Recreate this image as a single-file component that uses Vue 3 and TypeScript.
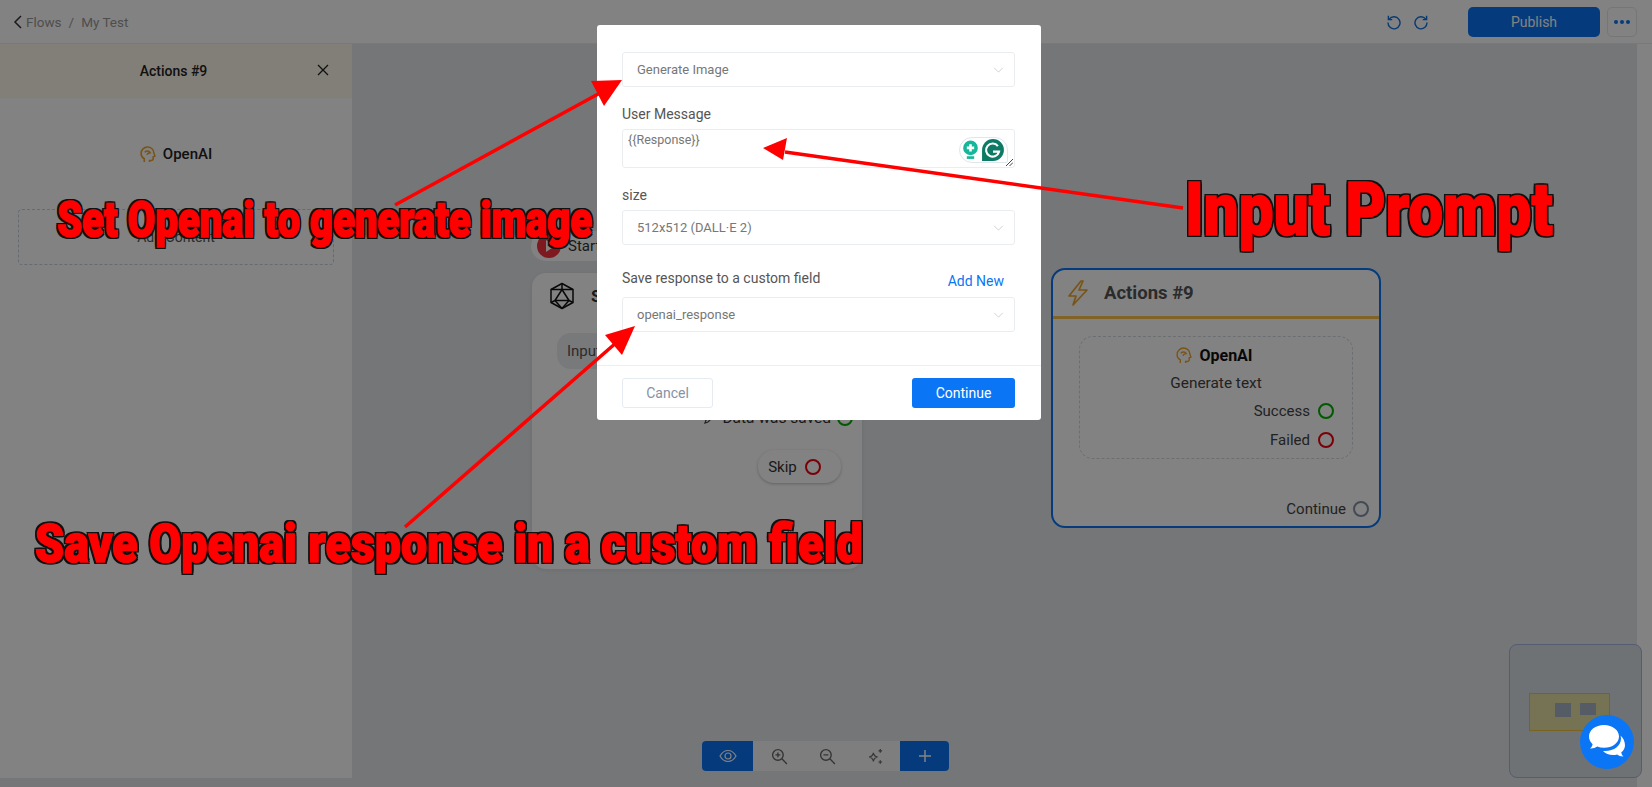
<script setup lang="ts">
const arrows = [
  { x1: 395, y1: 205, x2: 600, y2: 93, head: '622,80 591,81 604,106' },
  { x1: 1183, y1: 208, x2: 785, y2: 152, head: '763,148 787,138 783,160' },
  { x1: 405, y1: 527, x2: 617, y2: 342, head: '635,326 605,335 622,355' }
]
</script>

<template>
  <div class="page">
    <header class="topbar">
      <div class="crumbs">
        <svg width="10" height="14" viewBox="0 0 10 14" fill="none" stroke="#333" stroke-width="1.5"><path d="M8 1 2 7l6 6" /></svg>
        <span>Flows</span>
        <span class="slash">/</span>
        <span>My Test</span>
      </div>
      <div class="top-actions">
        <svg class="hist" width="16" height="16" viewBox="0 0 16 16" fill="none" stroke="#0d6fe0" stroke-width="1.4"><path d="M3.2 5.2A6 6 0 1 1 2 8.6" /><path d="M2.4 1.8v3.8h3.8" /></svg>
        <svg class="hist" width="16" height="16" viewBox="0 0 16 16" fill="none" stroke="#0d6fe0" stroke-width="1.4"><path d="M12.8 5.2A6 6 0 1 0 14 8.6" /><path d="M13.6 1.8v3.8H9.8" /></svg>
        <button class="publish">Publish</button>
        <button class="more"><i></i><i></i><i></i></button>
      </div>
    </header>

    <div class="workspace">
      <aside class="panel">
        <div class="panel-head">
          <span>Actions #9</span>
          <svg class="panel-close" width="14" height="14" viewBox="0 0 14 14" stroke="#222" stroke-width="1.3"><path d="M2 2l10 10M12 2 2 12" /></svg>
        </div>
        <div class="panel-app">
          <svg width="16" height="17" viewBox="0 0 15 16" fill="none" stroke="#eda52d" stroke-width="1.5"><path d="M4 15v-3C2 11 1 9 1 7c0-3.400 2.800-6 6-6 3.400 0 6 2.400 6 5.500l1 3-1.600.6V12c0 1-.8 1.600-2 1.600H9V15" /><path d="M4.500 6c.8-1.800 4-1.800 5 .2-1.500.2-2.500.4-3 2" /></svg>
          <span>OpenAI</span>
        </div>
        <div class="panel-drop">Add Content</div>
      </aside>

      <main class="canvas">
        <div class="start-pill">
          <svg width="28" height="28" viewBox="0 0 28 28"><circle cx="14" cy="14" r="12" fill="#f7323f" /><path d="M11 8l9 6-9 6z" fill="#fff" /></svg>
          <span>Start</span>
        </div>

        <section class="node node-input">
          <div class="node-input-head">
            <svg width="26" height="28" viewBox="0 0 26 28" fill="none" stroke="#111" stroke-width="1.5" stroke-linejoin="round"><path d="M13 1.500 24 7.500v13L13 26.500 2 20.500v-13z" /><path d="M13 7.500 20 18.500H6z" /><path d="M13 1.500v6M2 7.500l11 0 11 0M2 20.500l4-2M24 20.500l-4-2M13 26.500l-7-8M13 26.500l7-8" /></svg>
            <strong>Send</strong>
          </div>
          <div class="input-chip">Input</div>
          <div class="saved-row">
            <svg width="12" height="12" viewBox="0 0 12 12" fill="none" stroke="#444" stroke-width="1.200"><path d="M1 11l1-3 6-6 2 2-6 6z" /></svg>
            <span>Data was saved</span>
            <i class="port port-green"></i>
          </div>
          <div class="skip-pill">
            <span>Skip</span>
            <i class="port port-red"></i>
          </div>
        </section>

        <section class="node node-actions">
          <div class="actions-head">
            <svg width="22" height="28" viewBox="0 0 22 28" fill="none" stroke="#eda52d" stroke-width="1.700" stroke-linejoin="round"><path d="M14 2 2 17h7l-3 9 14-15h-8l4-9z" /></svg>
            <strong>Actions #9</strong>
          </div>
          <div class="actions-box">
            <div class="box-title">
              <svg width="16" height="17" viewBox="0 0 15 16" fill="none" stroke="#eda52d" stroke-width="1.300"><path d="M4 15v-3C2 11 1 9 1 7c0-3.400 2.800-6 6-6 3.400 0 6 2.400 6 5.500l1 3-1.600.6V12c0 1-.8 1.600-2 1.600H9V15" /><path d="M4.500 6c.8-1.800 4-1.800 5 .2-1.500.2-2.500.4-3 2" /></svg>
              <b>OpenAI</b>
            </div>
            <div class="box-sub">Generate text</div>
            <div class="box-row">Success <i class="port port-green"></i></div>
            <div class="box-row">Failed <i class="port port-red"></i></div>
          </div>
          <div class="continue-row">Continue <i class="port port-gray"></i></div>
        </section>

        <div class="toolbar">
          <button class="tool tool-blue tool-eye">
            <svg width="18" height="14" viewBox="0 0 18 14" fill="none" stroke="#fff" stroke-width="1.200"><path d="M1 7c2-3.500 4.800-5.500 8-5.500S15 3.500 17 7c-2 3.500-4.800 5.500-8 5.500S3 10.500 1 7z" /><circle cx="9" cy="7" r="3" /></svg>
          </button>
          <div class="tool-mid">
            <svg width="17" height="17" viewBox="0 0 16 16" fill="none" stroke="#666" stroke-width="1.300"><circle cx="6.500" cy="6.500" r="5" /><path d="M10.200 10.200 15 15M6.500 4.200v4.600M4.200 6.500h4.600" /></svg>
            <svg width="17" height="17" viewBox="0 0 16 16" fill="none" stroke="#666" stroke-width="1.300"><circle cx="6.500" cy="6.500" r="5" /><path d="M10.200 10.200 15 15M4.200 6.500h4.600" /></svg>
            <svg width="17" height="17" viewBox="0 0 16 16" fill="none" stroke="#666" stroke-width="1.100"><path d="M6 4.500c.5 2.500 1.500 3.500 4 4-2.500.5-3.500 1.500-4 4-.5-2.500-1.500-3.500-4-4 2.500-.5 3.500-1.500 4-4z" /><path d="M12.500 1v3.400M10.800 2.700h3.400M12.500 11.500v3.400M10.800 13.200h3.400" /></svg>
          </div>
          <button class="tool tool-blue tool-plus">
            <svg width="14" height="14" viewBox="0 0 14 14" stroke="#fff" stroke-width="1.500"><path d="M7 1v12M1 7h12" /></svg>
          </button>
        </div>
      </main>
      <div class="edge"></div>
    </div>

    <div class="minimap">
      <div class="mini-frame">
        <i></i><i class="short"></i>
      </div>
    </div>

    <div class="dim"></div>

    <div class="modal">
      <div class="modal-body">
        <div class="select"><span>Generate Image</span><svg class="chev" width="11" height="6" viewBox="0 0 12 7" fill="none" stroke="#ccd0d4" stroke-width="1.100"><path d="M1 1l5 5 5-5" /></svg></div>

        <label class="lbl lbl-msg">User Message</label>
        <div class="textarea">
          <span>&#123;&#123;Response&#125;&#125;</span>
          <div class="grammarly">
            <svg width="17" height="21" viewBox="0 0 16 20"><circle cx="8" cy="7.500" r="7" fill="#15b79a" /><path d="M8 4v7M4.500 7.500h7" stroke="#fff" stroke-width="2.400" /><rect x="4.500" y="15.500" width="7" height="2.500" fill="#15b79a" /></svg>
            <svg width="24" height="24" viewBox="0 0 22 22"><path d="M11 1a10 10 0 1 1 0 20H1V11A10 10 0 0 1 11 1z" fill="#0c7a64" /><path d="M15.500 7.500a6 6 0 1 0 1 5H11" fill="none" stroke="#fff" stroke-width="2" /></svg>
          </div>
          <svg class="resize" width="7" height="7" viewBox="0 0 7 7" stroke="#333" stroke-width=".9"><path d="M0 7l7-7M3.500 7 7 3.500" /></svg>
        </div>

        <label class="lbl lbl-size">size</label>
        <div class="select"><span>512x512 (DALL·E 2)</span><svg class="chev" width="11" height="6" viewBox="0 0 12 7" fill="none" stroke="#ccd0d4" stroke-width="1.100"><path d="M1 1l5 5 5-5" /></svg></div>

        <div class="save-row">
          <label class="lbl">Save response to a custom field</label>
          <a class="add-new">Add New</a>
        </div>
        <div class="select"><span>openai_response</span><svg class="chev" width="11" height="6" viewBox="0 0 12 7" fill="none" stroke="#ccd0d4" stroke-width="1.100"><path d="M1 1l5 5 5-5" /></svg></div>
      </div>
      <div class="modal-foot">
        <button class="btn-cancel">Cancel</button>
        <button class="btn-continue">Continue</button>
      </div>
    </div>

    <button class="chat">
      <svg width="40" height="36" viewBox="0 0 40 36" fill="#fff"><path d="M17 1C8.500 1 2 6 2 12.500c0 3 1.400 5.700 3.600 7.700-.3 1.700-1.300 3.300-2.600 4.300 2.800.2 5.400-.6 7.200-1.900 2.100.8 4.400 1.200 6.800 1.200 8.500 0 15-5 15-11.300S25.500 1 17 1z" /><path d="M33.500 11.500c.3 1 .5 2 .5 3 0 7-6.800 12.500-16 12.500h-2c2.400 2.500 6 4 10 4 1.400 0 2.800-.2 4.100-.6 1.600 1.300 3.900 2.100 6.400 2-1.200-1-2-2.500-2.300-4 2.400-1.900 3.800-4.400 3.800-7.200 0-3.800-1.800-7.400-4.500-9.700z" /></svg>
    </button>

    <svg class="arrows" width="1652" height="787" viewBox="0 0 1652 787">
      <g v-for="(a, i) in arrows" :key="i">
        <line :x1="a.x1" :y1="a.y1" :x2="a.x2" :y2="a.y2" stroke="#f00" stroke-width="3.500" />
        <polygon :points="a.head" fill="#f00" />
      </g>
    </svg>

    <div class="note note-set">Set Openai to generate image</div>
    <div class="note note-input">Input Prompt</div>
    <div class="note note-save">Save Openai response in a custom field</div>
  </div>
</template>

<style>
html, body {
  margin: 0;
  overflow: hidden;
}
</style>

<style scoped>
.page {
  position: relative;
  width: 1652px;
  height: 787px;
  overflow: hidden;
  font-family: Roboto, "Liberation Sans", sans-serif;
  font-size: 14px;
  color: #333;
  background: #fff;
}

.topbar {
  height: 43px;
  display: flex;
  align-items: center;
  justify-content: space-between;
  padding: 0 15px 0 13px;
  background: #fff;
  border-bottom: 1px solid #eceef0;
}

.crumbs {
  display: flex;
  align-items: center;
  gap: 5px;
  color: #9a9a9a;
  font-size: 13.500px;
}

.crumbs svg {
  margin-right: -2px;
}

.slash {
  margin: 0 2px;
}

.top-actions {
  display: flex;
  align-items: center;
}

.hist {
  margin-right: 11px;
}

.publish {
  width: 132px;
  height: 30px;
  margin-left: 28px;
  border: none;
  border-radius: 5px;
  background: #0a75f5;
  color: #fff;
  font: 400 14px Roboto, sans-serif;
}

.more {
  width: 30px;
  height: 30px;
  margin-left: 7px;
  display: flex;
  align-items: center;
  justify-content: center;
  gap: 2px;
  background: #fff;
  border: 1px solid #e6e8ea;
  border-radius: 5px;
}

.more i {
  width: 4px;
  height: 4px;
  border-radius: 50%;
  background: #0a75f5;
}

.workspace {
  display: flex;
  height: 743px;
  background: #e4e7ea;
}

.panel {
  width: 352px;
  height: 734px;
  flex-shrink: 0;
  background: #fff;
  display: flex;
  flex-direction: column;
}

.panel-head {
  position: relative;
  height: 54px;
  display: flex;
  align-items: center;
  justify-content: center;
  padding-right: 5px;
  background: #fff8ec;
  font-weight: 500;
  color: #222;
}

.panel-close {
  position: absolute;
  right: 22px;
  top: 19px;
}

.panel-app {
  margin-top: 47px;
  display: flex;
  justify-content: center;
  align-items: center;
  gap: 7px;
  font-size: 15px;
  font-weight: 500;
  color: #222;
}

.panel-drop {
  margin: 46px 18px 0;
  height: 54px;
  display: flex;
  align-items: center;
  justify-content: center;
  border: 1px dashed #c5d3de;
  border-radius: 4px;
  color: #555;
}

.canvas {
  position: relative;
  flex: 1;
}

.edge {
  width: 15px;
  background: #fff;
}

.start-pill {
  position: absolute;
  left: 179px;
  top: 187px;
  display: flex;
  align-items: center;
  gap: 5px;
  height: 30px;
  padding: 0 10px 0 4px;
  border-radius: 16px;
  background: #fff;
  font-size: 15px;
}

.node {
  position: absolute;
  box-sizing: border-box;
  background: #fff;
  border-radius: 14px;
}

.node-input {
  left: 180px;
  top: 229px;
  width: 330px;
  height: 296px;
  padding: 9px 20px;
  box-shadow: 0 1px 4px rgba(0, 0, 0, 0.08);
}

.node-input-head {
  display: flex;
  align-items: center;
  gap: 16px;
  margin-left: -3px;
  font-size: 17px;
}

.input-chip {
  margin: 23px 0 0 5px;
  width: 120px;
  height: 36px;
  padding-left: 10px;
  line-height: 36px;
  border-radius: 14px;
  background: #eceef0;
  color: #555;
  font-size: 15px;
}

.saved-row {
  position: absolute;
  right: 9px;
  top: 136px;
  display: flex;
  align-items: center;
  gap: 6px;
  font-size: 15.500px;
}

.skip-pill {
  position: absolute;
  right: 21px;
  top: 177px;
  width: 83px;
  height: 33px;
  box-sizing: border-box;
  padding-right: 10px;
  display: flex;
  align-items: center;
  justify-content: center;
  gap: 8px;
  background: #fff;
  border-radius: 16px;
  box-shadow: 0 1px 3px rgba(0, 0, 0, 0.25);
  font-size: 15px;
}

.port {
  display: inline-block;
  box-sizing: border-box;
  width: 16px;
  height: 16px;
  border-radius: 50%;
  border-width: 2px;
  border-style: solid;
  background: #fff;
}

.port-green {
  border-color: #00b000;
}

.port-red {
  border-color: #f00010;
}

.port-gray {
  border-color: #8492a6;
}

.node-actions {
  left: 699px;
  top: 224px;
  width: 330px;
  height: 260px;
  border: 2px solid #0a75f5;
}

.actions-head {
  height: 46px;
  display: flex;
  align-items: center;
  gap: 15px;
  padding-left: 14px;
  border-bottom: 3px solid #ffc24d;
  font-size: 18.500px;
  color: #555;
}

.actions-head strong {
  font-weight: 700;
}

.actions-box {
  box-sizing: border-box;
  margin: 17px 26px 0 26px;
  height: 123px;
  padding-top: 9px;
  border: 1.500px dashed #d3dae0;
  border-radius: 14px;
}

.box-title {
  display: flex;
  align-items: center;
  justify-content: center;
  gap: 7px;
  margin-right: 3px;
  font-size: 16px;
  color: #111;
}

.box-sub {
  margin-top: 9px;
  text-align: center;
  font-size: 15.400px;
  color: #444;
}

.box-row {
  margin-top: 9px;
  padding-right: 18px;
  display: flex;
  justify-content: flex-end;
  align-items: center;
  gap: 8px;
  height: 19px;
  font-size: 15px;
  color: #444;
}

.box-row + .box-row {
  margin-top: 10px;
}

.continue-row {
  position: absolute;
  right: 10px;
  top: 230px;
  display: flex;
  align-items: center;
  gap: 7px;
  font-size: 15px;
  color: #444;
}

.toolbar {
  position: absolute;
  left: 350px;
  top: 697px;
  width: 247px;
  height: 30px;
  display: flex;
  border-radius: 4px;
  overflow: hidden;
  background: #fff;
}

.tool {
  border: none;
  padding: 0;
  display: flex;
  align-items: center;
  justify-content: center;
}

.tool-blue {
  background: #0a75f5;
}

.tool-eye {
  width: 51px;
}

.tool-plus {
  width: 49px;
}

.tool-mid {
  flex: 1;
  display: flex;
  align-items: center;
  justify-content: space-around;
  padding: 0 0 0 2px;
  background: #f7f7f7;
}

.minimap {
  position: absolute;
  left: 1509px;
  top: 644px;
  box-sizing: border-box;
  width: 133px;
  height: 134px;
  border: 1px solid #aab4de;
  border-radius: 8px;
  background: #dadfe3;
}

.mini-frame {
  position: absolute;
  left: 19px;
  top: 48px;
  box-sizing: border-box;
  width: 81px;
  height: 38px;
  padding: 9px 0 0 25px;
  display: flex;
  gap: 9px;
  align-items: flex-start;
  border: 1px solid #f0c040;
  background: #e6e2a4;
}

.mini-frame i {
  width: 16px;
  height: 14px;
  background: #a7b4c6;
}

.mini-frame i.short {
  height: 12px;
}

.dim {
  position: absolute;
  inset: 0;
  background: rgba(0, 0, 0, 0.49);
}

.modal {
  position: absolute;
  left: 597px;
  top: 25px;
  width: 444px;
  height: 395px;
  box-sizing: border-box;
  display: flex;
  flex-direction: column;
  background: #fff;
  border-radius: 3px;
  color: #555;
}

.modal-body {
  flex: 1;
  padding: 27px 26px 0 25px;
  border-bottom: 1px solid #eceef0;
}

.select {
  box-sizing: border-box;
  height: 35px;
  padding: 0 10px 0 14px;
  display: flex;
  align-items: center;
  justify-content: space-between;
  border: 1px solid #eaedf0;
  border-radius: 3px;
  font-size: 13px;
  color: #777;
}

.lbl {
  display: block;
  font-size: 14px;
  color: #555;
  line-height: 18px;
}

.lbl-msg {
  margin-top: 18px;
  margin-bottom: 6px;
}

.lbl-size {
  margin-top: 18px;
  margin-bottom: 6px;
}

.textarea {
  position: relative;
  box-sizing: border-box;
  height: 39px;
  padding: 2px 5px;
  border: 1px solid #eaedf0;
  border-radius: 3px;
  font-size: 12.500px;
  line-height: 16px;
  color: #777;
}

.grammarly {
  position: absolute;
  right: 6px;
  top: 7px;
  box-sizing: border-box;
  width: 49px;
  height: 26px;
  display: flex;
  align-items: center;
  justify-content: center;
  gap: 2px;
  background: #fff;
  border: 1px solid #dfe6ee;
  border-radius: 13px 13px 2px 13px;
}

.resize {
  position: absolute;
  right: 1px;
  bottom: 1px;
}

.save-row {
  display: flex;
  justify-content: space-between;
  align-items: center;
  margin-top: 16px;
  height: 30px;
  padding-right: 11px;
  margin-bottom: 6px;
}

.save-row .lbl {
  margin-top: 4px;
}

.add-new {
  margin-top: 10px;
  font-size: 14px;
  color: #0a75f5;
}

.modal-foot {
  height: 54px;
  box-sizing: border-box;
  padding: 12px 26px 0 25px;
  display: flex;
  justify-content: space-between;
  align-items: flex-start;
}

.btn-cancel {
  width: 91px;
  height: 30px;
  background: #fff;
  border: 1px solid #e6ebf1;
  border-radius: 3px;
  color: #8492a6;
  font: 14px Roboto, sans-serif;
}

.btn-continue {
  width: 103px;
  height: 30px;
  background: #0a75f5;
  border: none;
  border-radius: 3px;
  color: #fff;
  font: 400 14px Roboto, sans-serif;
}

.chat {
  position: absolute;
  left: 1580px;
  top: 715px;
  width: 54px;
  height: 54px;
  padding: 0;
  border: none;
  border-radius: 50%;
  background: #0a75f5;
  display: flex;
  align-items: center;
  justify-content: center;
}

.arrows {
  position: absolute;
  left: 0;
  top: 0;
  pointer-events: none;
}

.note {
  position: absolute;
  white-space: nowrap;
  font-family: Roboto, "Liberation Sans", sans-serif;
  font-weight: 900;
  color: #f00;
  -webkit-text-stroke: 1.500px #f00;
  text-shadow: 2.500px 0 0 #111, -2.500px 0 0 #111, 0 2px 0 #111, 0 -2px 0 #111, 2.500px 2px 0 #111, -2.500px 2px 0 #111, 2.500px -2px 0 #111, -2.500px -2px 0 #111;
  transform-origin: left top;
}

.note-set {
  left: 57px;
  top: 188px;
  font-size: 50px;
  line-height: 64px;
  transform: scaleX(0.8);
}

.note-input {
  left: 1185px;
  top: 164px;
  font-size: 74px;
  line-height: 92px;
  transform: scaleX(0.838);
}

.note-save {
  left: 35px;
  top: 510px;
  font-size: 54px;
  line-height: 68px;
  transform: scaleX(0.862);
}
</style>
